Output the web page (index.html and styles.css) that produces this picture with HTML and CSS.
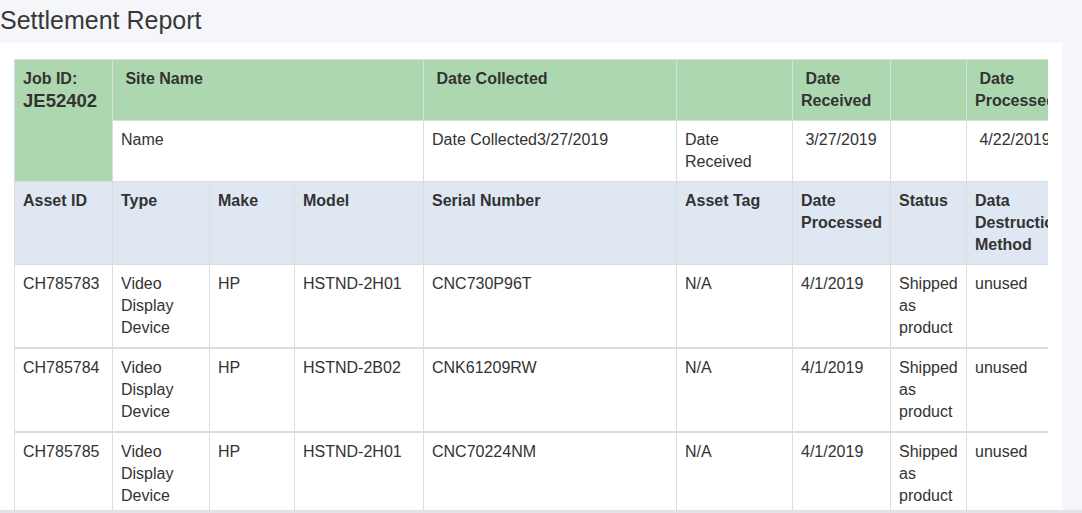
FILE: index.html
```html
<!DOCTYPE html>
<html lang="en">
<head>
<meta charset="utf-8">
<title>Settlement Report</title>
<link rel="stylesheet" href="styles.css">
</head>
<body>
<h1 class="page-title">Settlement Report</h1>
<div class="panel">
  <div class="table-wrap">
    <table class="report">
      <colgroup>
        <col class="c1"><col class="c2"><col class="c3"><col class="c4"><col class="c5"><col class="c6"><col class="c7"><col class="c8"><col class="c9">
      </colgroup>
      <thead>
        <tr class="job-head">
          <th rowspan="2" class="job-id">Job ID:<br><span class="job-num">JE52402</span></th>
          <th colspan="3">&nbsp;Site Name</th>
          <th>&nbsp;Date Collected</th>
          <th></th>
          <th>&nbsp;Date Received</th>
          <th></th>
          <th>&nbsp;Date Processed</th>
        </tr>
        <tr class="job-info">
          <td colspan="3">Name</td>
          <td>Date Collected3/27/2019</td>
          <td>Date Received</td>
          <td>&nbsp;3/27/2019</td>
          <td></td>
          <td>&nbsp;4/22/2019</td>
        </tr>
        <tr class="asset-head">
          <th>Asset ID</th>
          <th>Type</th>
          <th>Make</th>
          <th>Model</th>
          <th>Serial Number</th>
          <th>Asset Tag</th>
          <th>Date Processed</th>
          <th>Status</th>
          <th>Data Destruction Method</th>
        </tr>
      </thead>
      <tbody>
        <tr>
          <td>CH785783</td><td>Video Display Device</td><td>HP</td><td>HSTND-2H01</td><td>CNC730P96T</td><td>N/A</td><td>4/1/2019</td><td>Shipped as product</td><td>unused</td>
        </tr>
      </tbody>
      <tbody>
        <tr>
          <td>CH785784</td><td>Video Display Device</td><td>HP</td><td>HSTND-2B02</td><td>CNK61209RW</td><td>N/A</td><td>4/1/2019</td><td>Shipped as product</td><td>unused</td>
        </tr>
      </tbody>
      <tbody>
        <tr>
          <td>CH785785</td><td>Video Display Device</td><td>HP</td><td>HSTND-2H01</td><td>CNC70224NM</td><td>N/A</td><td>4/1/2019</td><td>Shipped as product</td><td>unused</td>
        </tr>
      </tbody>
    </table>
  </div>
</div>
<div class="bottom-rule"></div>
</body>
</html>
```

FILE: styles.css
```css
html, body {
  margin: 0;
  padding: 0;
}
body {
  background: #f5f6fa;
  font-family: "Liberation Sans", Arial, sans-serif;
  color: #333;
  overflow: hidden;
}
.page-title {
  margin: 0;
  height: 43px;
  box-sizing: border-box;
  padding: 0 0 2px 0;
  font-size: 25px;
  line-height: 41px;
  font-weight: normal;
  color: #383838;
}
.panel {
  width: 1062px;
  box-sizing: border-box;
  background: #fff;
  padding: 16px 14px 0 14px;
}
.table-wrap {
  overflow: hidden;
  width: 1034px;
}
.report {
  border-collapse: collapse;
  table-layout: fixed;
  width: 1062px;
  font-size: 16px;
  line-height: 22px;
  color: #333;
}
.c1 { width: 98px; }
.c2 { width: 97px; }
.c3 { width: 85px; }
.c4 { width: 129px; }
.c5 { width: 253px; }
.c6 { width: 116px; }
.c7 { width: 98px; }
.c8 { width: 76px; }
.c9 { width: 110px; }
.report th,
.report td {
  border: 1px solid #ddd;
  padding: 8px;
  text-align: left;
  vertical-align: top;
}
.report th {
  font-weight: bold;
}
.job-num {
  font-size: 18.5px;
}
.job-head th {
  background: #add8af;
}
.job-info td {
  background: #fff;
}
.asset-head th {
  background: #dfe8f2;
}
.report tbody + tbody {
  border-top: 2px solid #ddd;
}
.report tbody td {
  background: #fff;
}
.bottom-rule {
  position: fixed;
  left: 0;
  right: 0;
  bottom: 0;
  height: 3px;
  background: #e2e3e8;
}
```
